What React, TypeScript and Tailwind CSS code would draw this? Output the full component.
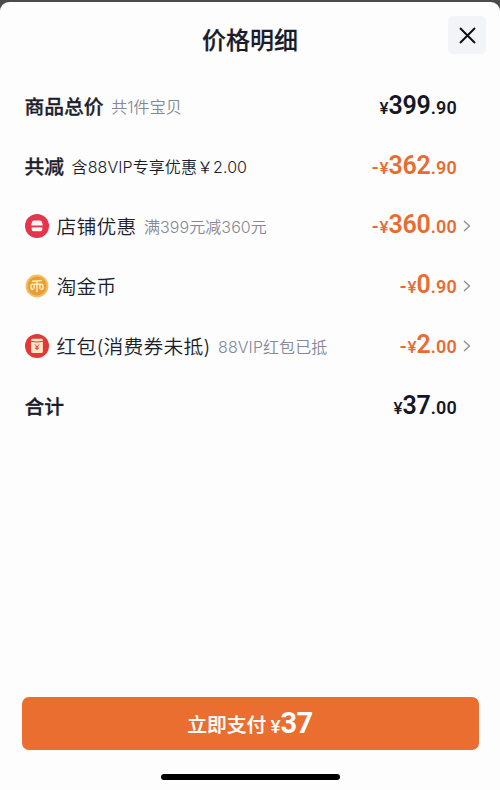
import React from 'react';

const cjk = "font-['Noto_Sans_CJK_SC',sans-serif]";
const mixed = "font-[Inter,'Noto_Sans_CJK_SC',sans-serif]";
const digits = "font-[Roboto,'Liberation_Sans',sans-serif]";

function ShopIcon() {
  return (
    <svg className="size-6 shrink-0" viewBox="0 0 24 24">
      <circle cx="12" cy="12" r="12" fill="#e3354b" />
      <path d="M9 6.6h6q1.9 0 2.3 2.4l.5 2.4H6.2L6.7 9q.4-2.4 2.3-2.4Z" fill="#fff5f0" />
      <path d="M6.7 13.3q1.3.7 2.6-.2 1.3 1 2.7 0 1.4 1 2.7 0 1.3.9 2.6.2v2.3q0 1.6-1.6 1.6H8.3q-1.6 0-1.6-1.6Z" fill="#fff5f0" />
    </svg>
  );
}

function CoinIcon() {
  return (
    <svg className="size-6 shrink-0" viewBox="0 0 24 24">
      <circle cx="12" cy="12" r="11.4" fill="#f3be62" />
      <circle cx="12" cy="12" r="9.5" fill="#eb9d35" />
      <g fill="none" stroke="#ffebb5" strokeWidth="1.6" strokeLinecap="round" strokeLinejoin="round">
        <path d="M7.6 7.3q4.4 0 8.8-.8M12 7.2v10.3M7.8 15.4q-1.8 0-1.8-1.6v-1.6q0-1.9 1.8-1.9h8.4q1.8 0 1.8 1.9v1.6q0 1.6-1.8 1.6M9.1 10.5v3.6M14.9 10.5v3.6" />
      </g>
    </svg>
  );
}

function EnvelopeIcon() {
  return (
    <svg className="size-6 shrink-0" viewBox="0 0 24 24">
      <circle cx="12" cy="12" r="12" fill="#e13a35" />
      <path d="M7.3 4.8h9.4q1.2 0 1.2 1.2v.8q-5.9 1.4-11.8 0V6q0-1.2 1.2-1.2Z" fill="#ffe5c8" />
      <path d="M6.1 7.8q5.9 1.4 11.8 0v9.6q0 1.6-1.6 1.6H7.7q-1.6 0-1.6-1.6Z" fill="#ffe5c8" />
      <path d="m10 10.4 2 2.6 2-2.6M12 13v3.2M10.2 13.1h3.6M10.2 14.6h3.6" fill="none" stroke="#c9493f" strokeWidth="0.9" />
    </svg>
  );
}

type RowProps = {
  label: string;
  note?: string;
  noteClass?: string;
  whole: string;
  cents: string;
  discount?: boolean;
  link?: boolean;
  icon?: React.ReactNode;
};

function Row({ label, note, noteClass = 'text-[#858897]', whole, cents, discount, link, icon }: RowProps) {
  return (
    <div className="flex h-[59.9px] items-center pl-[24.5px]">
      {icon && <div className="-mt-0.5 mr-2 h-6">{icon}</div>}
      <div className={`flex items-center whitespace-nowrap pt-px leading-[30px] ${mixed}`}>
        <span className={`text-[19.8px] ${icon ? 'font-[350] tracking-[0.2px]' : 'font-medium [-webkit-text-stroke:0.3px]'} text-[#1c1e2c]`}>{label}</span>
        {note && <span className={`ml-[7.5px] text-[16px] font-[350] tracking-[0.08px] ${noteClass}`}>{note}</span>}
      </div>
      <div className={`ml-auto flex items-baseline font-semibold leading-[30px] ${digits} ${discount ? 'text-[#e66d32]' : 'text-[#151725]'} ${link ? '-mt-px' : 'pt-px'}`}>
        {discount && <span className="mr-px text-[20px] font-medium">-</span>}
        <span className="text-[17px] font-medium">¥</span>
        <span className="text-[25px] tracking-[-0.2px]">{whole}</span>
        <span className="text-[18px] tracking-[0.2px]">{cents}</span>
      </div>
      <div className="flex w-[43px] pl-[6px]">
        {link && (
          <svg className="-mt-0.5 h-3 w-2" viewBox="0 0 8 12">
            <path d="m1 1 5.5 5L1 11" fill="none" stroke="#8d8f96" strokeWidth="1.4" />
          </svg>
        )}
      </div>
    </div>
  );
}

export default function App() {
  return (
    <div className="h-[790px] w-[500px] overflow-hidden bg-[#4b4b4b] pt-0.5">
      <main className="flex h-[788px] flex-col rounded-t-[9px] bg-[#fdfdfd]">
        <header className="grid h-[75px] grid-cols-[1fr_auto_1fr] items-start">
          <span />
          <h1 className={`pt-[19px] text-[24px] font-medium leading-[36px] text-[#191b29] [-webkit-text-stroke:0.2px] ${cjk}`}>价格明细</h1>
          <button className="mr-[14px] mt-[14px] grid size-[38px] place-items-center justify-self-end rounded-[5px] bg-[#f3f4f8]">
            <svg className="size-[17px]" viewBox="0 0 17 17">
              <path d="m1 1 15 15M16 1 1 16" stroke="#101118" strokeWidth="2" />
            </svg>
          </button>
        </header>
        <section>
          <Row label="商品总价" note="共1件宝贝" whole="399" cents=".90" />
          <Row label="共减" note="含88VIP专享优惠￥2.00" noteClass="text-[#191b29]" whole="362" cents=".90" discount />
          <Row icon={<ShopIcon />} label="店铺优惠" note="满399元减360元" whole="360" cents=".00" discount link />
          <Row icon={<CoinIcon />} label="淘金币" whole="0" cents=".90" discount link />
          <Row icon={<EnvelopeIcon />} label="红包(消费券未抵)" note="88VIP红包已抵" whole="2" cents=".00" discount link />
          <Row label="合计" whole="37" cents=".00" />
        </section>
        <footer className="mt-auto flex flex-col items-center pb-[10px]">
          <button className="mb-6 flex h-[53px] w-[457px] items-center justify-center rounded-[7px] bg-[#ea6e2f] text-white">
            <span className="flex items-baseline leading-[30px]">
              <span className={`text-[19.8px] font-medium [-webkit-text-stroke:0.2px] ${cjk}`}>立即支付</span>
              <span className={`ml-1 translate-y-px text-[19px] font-medium ${digits}`}>¥</span>
              <span className={`translate-y-px text-[29px] font-bold tracking-[-0.5px] ${digits}`}>37</span>
            </span>
          </button>
          <div className="h-[6px] w-[179px] rounded-full bg-black" />
        </footer>
      </main>
    </div>
  );
}
